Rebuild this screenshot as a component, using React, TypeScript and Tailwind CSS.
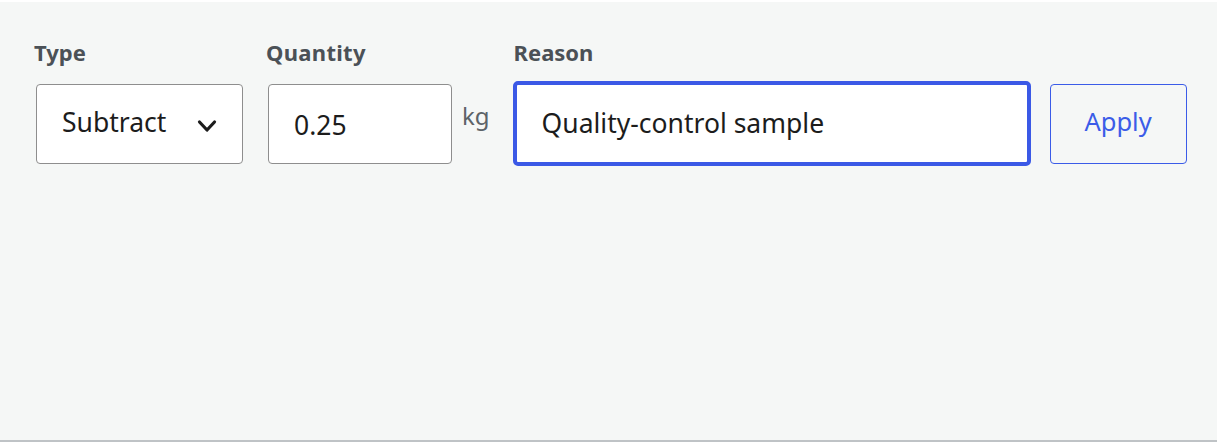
import React from "react";

export default function App() {
  const font = { fontFamily: '"Noto Sans", "Open Sans", sans-serif' };
  return (
    <div className="w-[1218px] h-[442px] bg-white pt-[2px] pr-[1px]" style={font}>
      <div className="h-full bg-[#f5f7f6] border-b-2 border-[#bfc3c6] pl-[34px] pt-[34px]">
        <div className="flex items-start">
          <div className="flex flex-col w-[209px]">
            <label className="text-[22px] leading-[32px] font-bold text-[#4b5157] h-[32px]">Type</label>
            <div className="mt-[16px] ml-[2px] w-[207px] h-[80px] bg-white border border-[#8e8e8e] rounded-[4px] flex items-center justify-between pl-[25px] pr-[25px]">
              <span className="text-[26.5px] leading-none text-[#1c1c1c] -mt-[3px]">Subtract</span>
              <svg width="20" height="14" viewBox="0 0 20 14" className="mt-[4px]">
                <path d="M2.5 3 L10 11 L17.5 3" fill="none" stroke="#1c1c1c" strokeWidth="3.2" strokeLinecap="round" strokeLinejoin="round" />
              </svg>
            </div>
          </div>
          <div className="flex flex-col ml-[23px]">
            <label className="text-[22px] leading-[32px] font-bold text-[#4b5157] h-[32px] tracking-[0.3px]">Quantity</label>
            <div className="mt-[16px] flex items-start">
              <div className="ml-[2px] w-[184px] h-[80px] bg-white border border-[#8e8e8e] rounded-[4px] flex items-center pl-[25px]">
                <span className="text-[26.5px] leading-none text-[#1c1c1c] mt-[2px]">0.25</span>
              </div>
              <span className="ml-[10px] mt-[20px] text-[24px] leading-none text-[#5d6368]">kg</span>
            </div>
          </div>
          <div className="flex flex-col ml-[24px]">
            <label className="text-[22px] leading-[32px] font-bold text-[#4b5157] h-[32px]">Reason</label>
            <div className="mt-[13px] flex items-start">
              <div className="-ml-[1px] w-[518px] h-[85px] bg-white border-[4px] border-[#3b59e6] rounded-[5px] flex items-center pl-[25px]">
                <span className="text-[26.5px] leading-none text-[#1c1c1c]">Quality-control sample</span>
              </div>
              <button className="ml-[19px] mt-[3px] w-[137px] h-[80px] border border-[#3b5ce8] rounded-[4px] text-[25.5px] leading-none text-[#3b5ce8] flex items-center justify-center pb-[5px]">
                Apply
              </button>
            </div>
          </div>
        </div>
      </div>
    </div>
  );
}
